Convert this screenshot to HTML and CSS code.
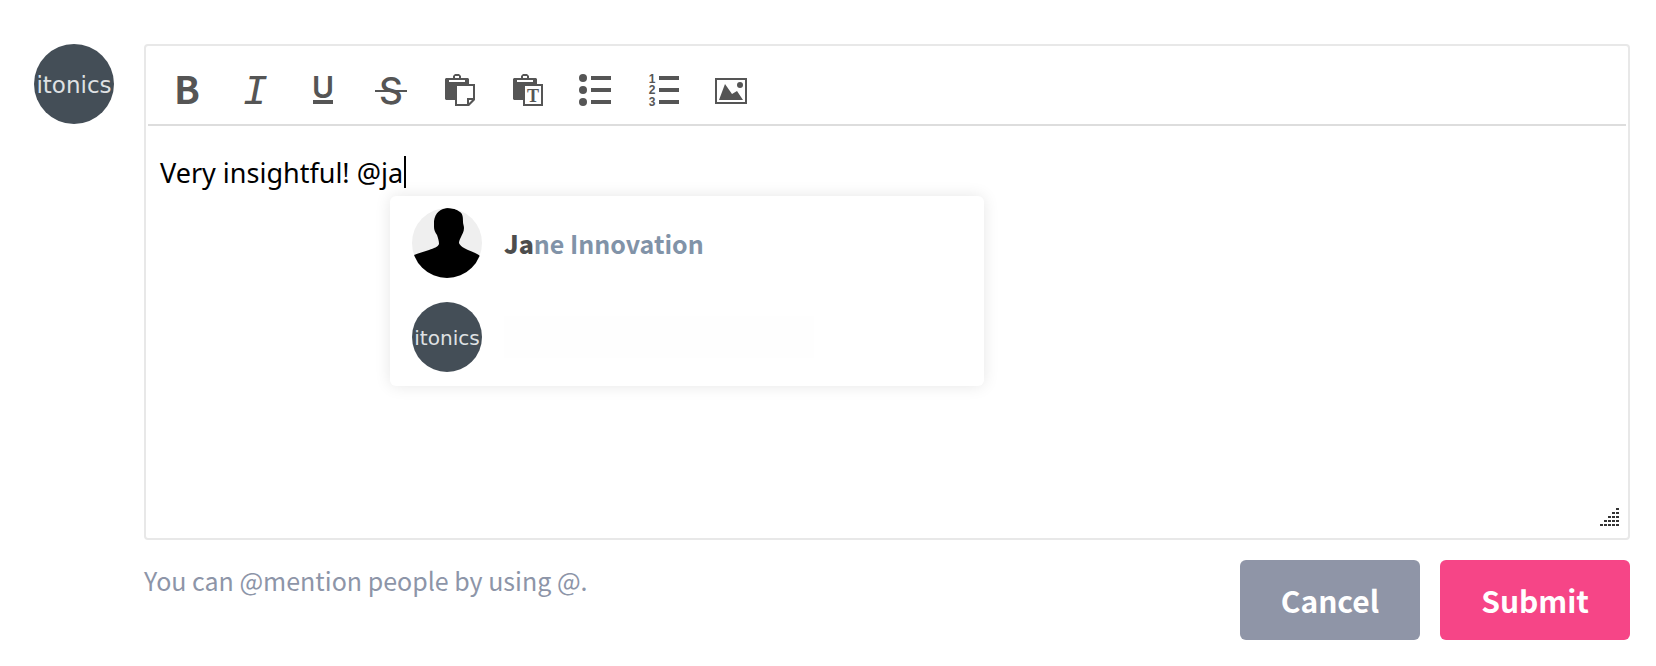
FILE: index.html
```html
<!DOCTYPE html>
<html lang="en">
<head>
    <meta charset="UTF-8">
    <meta name="viewport" content="width=device-width, initial-scale=1.0">
    <title>Add comment</title>
    <link rel="stylesheet" href="styles.css">
</head>
<body>

<form class="comment-form">
    <svg class="avatar" viewBox="0 0 80 80" role="img" aria-label="itonics">
        <circle cx="40" cy="40" r="40" fill="#444e57"/>
        <text class="logo-text" x="40" y="49" text-anchor="middle">itonics</text>
    </svg>

    <div class="comment-main">
        <div class="editor">
            <div class="toolbar" role="toolbar" aria-label="Formatting">
                <button type="button" class="tool-btn" aria-label="Bold">
                    <svg viewBox="0 0 32 32"><text class="icon-b" x="16" y="30" text-anchor="middle">B</text></svg>
                </button>
                <button type="button" class="tool-btn" aria-label="Italic">
                    <svg viewBox="0 0 32 32"><text class="icon-i" x="16" y="30" text-anchor="middle">I</text></svg>
                </button>
                <button type="button" class="tool-btn" aria-label="Underline">
                    <svg viewBox="0 0 32 32">
                        <text class="icon-u" x="16" y="24" text-anchor="middle">U</text>
                        <rect x="6" y="26" width="20" height="4"/>
                    </svg>
                </button>
                <button type="button" class="tool-btn" aria-label="Strikethrough">
                    <svg viewBox="0 0 32 32">
                        <text class="icon-s" x="16" y="30" text-anchor="middle">S</text>
                        <rect x="0" y="16" width="32" height="2"/>
                    </svg>
                </button>
                <button type="button" class="tool-btn" aria-label="Paste">
                    <svg viewBox="0 0 32 32">
                        <path fill-rule="evenodd" d="M3 4h7V2l2-2h4l2 2v2h7l1 1v5H12v16H3l-1-1V5zM12 2v2h4V2zM6 6v2h16V6z"/>
                        <path fill-rule="evenodd" d="M12 10h20v16l-6 6H12zM14 12v18h10v-6h6V12zM26 26v3l3-3z"/>
                    </svg>
                </button>
                <button type="button" class="tool-btn" aria-label="Paste as plain text">
                    <svg viewBox="0 0 32 32">
                        <path fill-rule="evenodd" d="M3 4h7V2l2-2h4l2 2v2h7l1 1v5H12v16H3l-1-1V5zM12 2v2h4V2zM6 6v2h16V6z"/>
                        <path fill-rule="evenodd" d="M12 10h20v22H12zM14 12v18h16V12z"/>
                        <text class="icon-t" x="22" y="28" text-anchor="middle">T</text>
                    </svg>
                </button>
                <button type="button" class="tool-btn" aria-label="Bulleted list">
                    <svg viewBox="0 0 32 32">
                        <circle cx="4" cy="4" r="4"/>
                        <circle cx="4" cy="16" r="4"/>
                        <circle cx="4" cy="28" r="4"/>
                        <path d="M12 2h20v4H12zM12 14h20v4H12zM12 26h20v4H12z"/>
                    </svg>
                </button>
                <button type="button" class="tool-btn" aria-label="Numbered list">
                    <svg viewBox="0 0 32 32">
                        <text class="icon-num" x="5" y="9" text-anchor="middle">1</text>
                        <text class="icon-num" x="5" y="20" text-anchor="middle">2</text>
                        <text class="icon-num" x="5" y="32" text-anchor="middle">3</text>
                        <path d="M12 2h20v4H12zM12 14h20v4H12zM12 26h20v4H12z"/>
                    </svg>
                </button>
                <button type="button" class="tool-btn" aria-label="Image">
                    <svg viewBox="0 0 32 32">
                        <path fill-rule="evenodd" d="M0 4h32v26H0zM2 6v22h28V6z"/>
                        <path d="M4 26L10 10l7 10 5-3 6 9z"/>
                        <circle cx="25" cy="11" r="3"/>
                    </svg>
                </button>
            </div>

            <div class="editor-body">
                <textarea class="editor-text" aria-label="Comment" spellcheck="false">Very insightful! @ja</textarea>
                <span class="caret"></span>

                <ul class="mention-list">
                    <li>
                        <button type="button" class="mention">
                            <svg class="mention-avatar" viewBox="0 0 70 70" aria-hidden="true">
                                <clipPath id="round"><circle cx="35" cy="35" r="35"/></clipPath>
                                <g clip-path="url(#round)">
                                    <rect width="70" height="70" fill="#efefef"/>
                                    <path d="M36 0c6 0 9 2 12 4 3 2 3 6 3 10 0 2 1 4 1 6 0 4-2 6-3 9-1 2-2 4-2 6 1 3 5 5 9 7 5 2 10 4 12 6v22H2V47c4-2 10-3 15-5 5-2 9-3 10-6 0-3-1-6-2-9-2-3-3-5-3-8V13C23 5 29 0 36 0z"/>
                                </g>
                            </svg>
                            <span class="mention-name"><strong>Ja</strong>ne Innovation</span>
                        </button>
                    </li>
                    <li>
                        <button type="button" class="mention" aria-label="itonics">
                            <svg class="mention-avatar" viewBox="0 0 80 80" aria-hidden="true">
                                <circle cx="40" cy="40" r="40" fill="#444e57"/>
                                <text class="logo-text" x="40" y="49" text-anchor="middle">itonics</text>
                            </svg>
                            <span class="mention-blank"></span>
                        </button>
                    </li>
                </ul>

                <svg class="resize-handle" viewBox="0 0 20 20" aria-hidden="true">
                    <path d="M16 0h3v2h-3zM12 4h3v2h-3zM16 4h3v2h-3zM8 8h3v2H8zM12 8h3v2h-3zM16 8h3v2h-3zM4 12h3v2H4zM8 12h3v2H8zM12 12h3v2h-3zM16 12h3v2h-3zM0 16h3v2H0zM4 16h3v2H4zM8 16h3v2H8zM12 16h3v2h-3zM16 16h3v2h-3z"/>
                </svg>
            </div>
        </div>

        <div class="form-footer">
            <p class="hint">You can @mention people by using @.</p>
            <div class="actions">
                <button type="button" class="btn cancel-btn">Cancel</button>
                <button type="submit" class="btn submit-btn">Submit</button>
            </div>
        </div>
    </div>
</form>

</body>
</html>
```
FILE: styles.css
```css
* {
    box-sizing: border-box;
}
body {
    margin: 0;
    background-color: #fff;
    font-family: "Noto Sans CJK SC", "Open Sans", sans-serif;
}
button {
    border: none;
    background: none;
    font-family: inherit;
    cursor: pointer;
}
.logo-text {
    font-family: "DejaVu Sans", sans-serif;
    font-size: 23px;
    fill: #dfe1e3;
}
.comment-form {
    display: flex;
    align-items: flex-start;
    gap: 30px;
    padding: 44px 26px 26px 34px;
}
.avatar {
    flex: none;
    width: 80px;
    height: 80px;
}
.comment-main {
    flex: 1;
    min-width: 0;
}
.editor {
    padding: 0 2px 2px;
    border: 2px solid #e8e8e8;
    border-radius: 4px;
}

/* toolbar */
.toolbar {
    display: flex;
    padding: 24px 5px 14px;
    border-bottom: 2px solid #ddd;
}
.tool-btn {
    display: flex;
    justify-content: center;
    width: 68px;
    padding: 4px 0;
}
.tool-btn svg {
    width: 32px;
    height: 32px;
    fill: #555;
    overflow: visible;
}
.icon-b {
    font: bold 38px "Noto Sans CJK SC", sans-serif;
}
.icon-i {
    font: italic 42px "Liberation Mono", monospace;
}
.icon-u {
    font: 600 30px Inter, sans-serif;
}
.icon-s {
    font: 500 37px Inter, sans-serif;
}
.icon-t {
    font: bold 18px "Liberation Serif", serif;
}
.icon-num {
    font: bold 12px "Liberation Sans", sans-serif;
}

/* text area and mention popup */
.editor-body {
    position: relative;
}
.editor-text {
    display: block;
    width: 100%;
    height: 410px;
    padding: 29px 12px;
    border: none;
    outline: none;
    resize: none;
    background: none;
    color: #000;
    font-family: "Noto Sans", sans-serif;
    font-size: 27px;
    line-height: 36px;
}
.caret {
    position: absolute;
    top: 30px;
    left: 256px;
    width: 2px;
    height: 32px;
    background-color: #000;
}
.mention-list {
    position: absolute;
    top: 70px;
    left: 242px;
    width: 594px;
    margin: 0;
    padding: 12px 22px 14px;
    display: grid;
    gap: 24px;
    list-style: none;
    background-color: #fff;
    border-radius: 6px;
    box-shadow: 0 0 16px rgba(0, 0, 0, 0.1);
}
.mention {
    display: flex;
    align-items: center;
    gap: 22px;
    width: 100%;
    padding: 0;
    text-align: left;
}
.mention-avatar {
    flex: none;
    width: 70px;
    height: 70px;
}
.mention-name {
    color: #8193a8;
    font-size: 25px;
    font-weight: bold;
    line-height: 36px;
}
.mention-name strong {
    color: #4d4d4d;
}
.mention-blank {
    width: 310px;
    height: 42px;
    background-color: #fefefe;
}
.resize-handle {
    position: absolute;
    right: 6px;
    bottom: 8px;
    width: 20px;
    height: 20px;
    fill: #333;
}

/* footer */
.form-footer {
    display: flex;
    justify-content: space-between;
    align-items: flex-start;
    margin-top: 20px;
}
.hint {
    margin: 0;
    padding-top: 2px;
    color: #8d95a8;
    font-size: 25px;
    line-height: 36px;
}
.actions {
    display: flex;
    gap: 20px;
}
.btn {
    height: 80px;
    padding: 0 41px;
    border-radius: 6px;
    color: #fff;
    font-size: 30px;
    font-weight: bold;
}
.cancel-btn {
    background-color: #8f95a7;
}
.submit-btn {
    background-color: #f64587;
}
```
